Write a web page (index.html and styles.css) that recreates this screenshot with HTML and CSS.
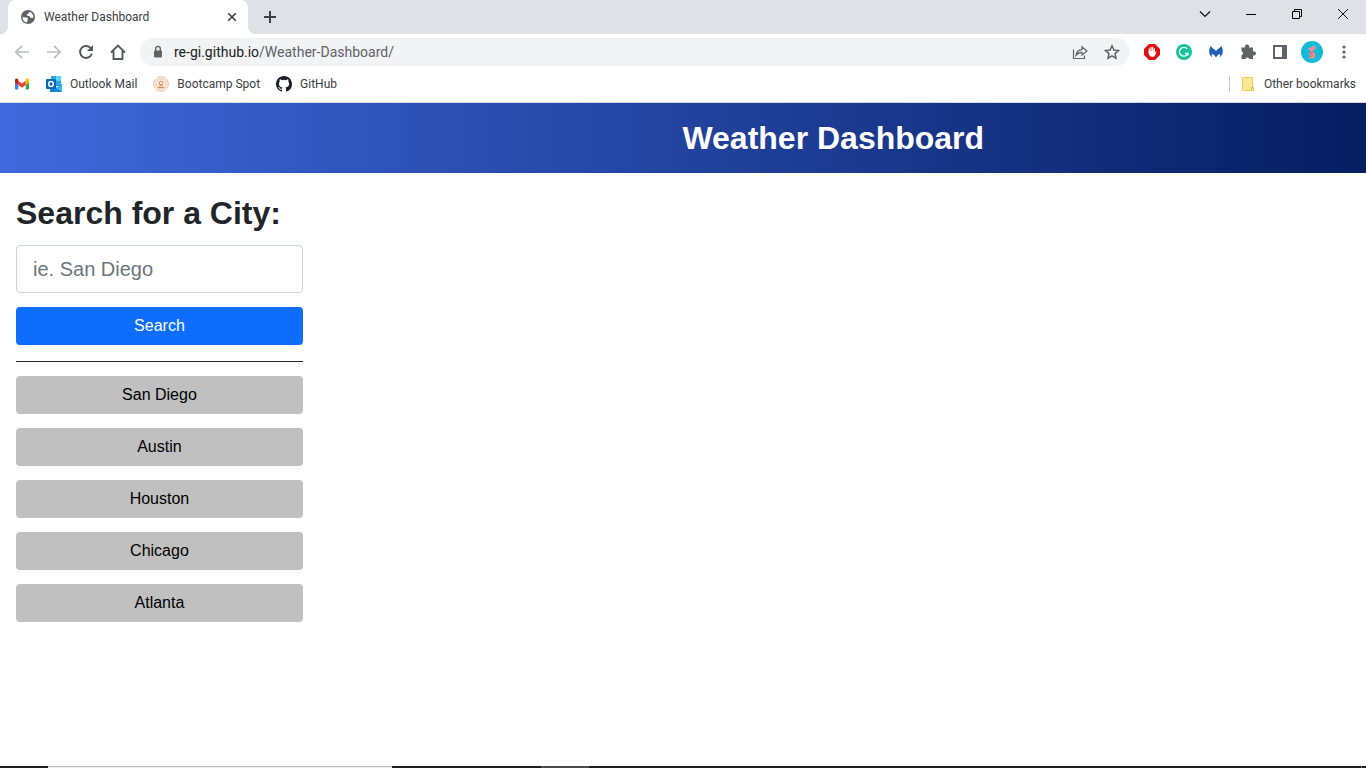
FILE: index.html
```html
<!DOCTYPE html>
<html lang="en">
<head>
<meta charset="utf-8">
<meta name="viewport" content="width=device-width, initial-scale=1">
<title>Weather Dashboard</title>
<link rel="stylesheet" href="styles.css">
</head>
<body>
<div class="browser">
  <div class="tabstrip">
    <div class="tab">
      <svg class="icon16" viewBox="0 0 16 16"><circle cx="8" cy="8" r="7" fill="#5f6368"/><path d="M2.500 8.200l4.300.2c1.200.2 1.500 1.300.8 2.200l-.5 2.900C4.300 13.200 2.600 11 2.500 8.200zM9.500 2.700L8.300 4.800l-1.500.4.300 1.500 2.200.3 1.200 1.700 2.900.2c.4-2.800-1.200-5.200-3.900-6.200z" fill="#fff"/></svg>
      <span class="tab-title">Weather Dashboard</span>
      <button class="tab-close" aria-label="Close tab"><svg class="icon16" viewBox="0 0 16 16"><path d="M4.200 4.200l7.600 7.600M11.800 4.200l-7.600 7.600" stroke="#3c4043" stroke-width="1.600"/></svg></button>
    </div>
    <button class="new-tab" aria-label="New tab"><svg class="icon16" viewBox="0 0 16 16"><path d="M8 2v12M2 8h12" stroke="#3c4043" stroke-width="2"/></svg></button>
    <div class="window-controls">
      <button class="window-button" aria-label="Search tabs"><svg class="icon16" viewBox="0 0 16 16"><path d="M3 5.500l5 5 5-5" fill="none" stroke="#111" stroke-width="1.200"/></svg></button>
      <button class="window-button" aria-label="Minimize"><svg class="icon16" viewBox="0 0 16 16"><path d="M3 8.500h10" stroke="#000"/></svg></button>
      <button class="window-button" aria-label="Restore"><svg class="icon16" viewBox="0 0 16 16"><path d="M3.500 5.500h7v7h-7zM5.500 5.500v-2h7v7h-2" fill="none" stroke="#000"/></svg></button>
      <button class="window-button" aria-label="Close"><svg class="icon16" viewBox="0 0 16 16"><path d="M3 3l10 10M13 3L3 13" stroke="#111"/></svg></button>
    </div>
  </div>

  <div class="toolbar">
    <button class="tool" aria-label="Back"><svg class="icon16" viewBox="0 0 16 16"><path d="M15 8H2M8 1.800L1.800 8 8 14.200" fill="none" stroke="#babcbe" stroke-width="1.700"/></svg></button>
    <button class="tool" aria-label="Forward"><svg class="icon16" viewBox="0 0 16 16"><path d="M1 8h13M8 1.800L14.200 8 8 14.200" fill="none" stroke="#babcbe" stroke-width="1.700"/></svg></button>
    <button class="tool" aria-label="Reload"><svg class="icon16" viewBox="0 0 16 16"><path d="M13.200 4.700A6 6 0 1 0 13.800 9.800" fill="none" stroke="#54585d" stroke-width="2"/><path d="M15 1v6H9z" fill="#54585d"/></svg></button>
    <button class="tool" aria-label="Home"><svg class="icon16" viewBox="0 0 16 16"><path d="M1 8.500L8 1.500l7 7M3.500 7v8h9V7" fill="none" stroke="#54585d" stroke-width="1.900"/></svg></button>
    <div class="omnibox">
      <svg class="icon16" viewBox="0 0 16 16"><rect x="4" y="6.500" width="8" height="7" rx="1" fill="#5f6368"/><path d="M5.700 7V4.700a2.300 2.300 0 0 1 4.600 0V7" fill="none" stroke="#5f6368" stroke-width="1.400"/></svg>
      <div class="address" role="textbox" aria-label="Address" contenteditable="true" spellcheck="false">re-gi.github.io<span class="address-path">/Weather-Dashboard/</span></div>
      <button class="tool" aria-label="Share"><svg class="icon16" viewBox="0 0 16 16"><path d="M1.500 5.500v9h11v-3M4 11.500c.3-3.600 2.400-5.600 6-5.900V2.700L15 7l-5 4V8.400C7.500 8.300 5.600 9.200 4 11.500z" fill="none" stroke="#5f6368" stroke-width="1.200"/></svg></button>
      <button class="tool" aria-label="Bookmark"><svg class="icon16" viewBox="0 0 16 16"><path d="M8 1.800l1.900 4.200 4.600.5-3.500 3.100 1 4.600-4-2.400-4 2.400 1-4.600L1.500 6.500 6.100 6z" fill="none" stroke="#5f6368" stroke-width="1.500"/></svg></button>
    </div>
    <button class="tool" aria-label="Ad blocker"><svg class="icon16" viewBox="0 0 16 16"><path d="M5 0h6l5 5v6l-5 5H5l-5-5V5z" fill="#e40d0d"/><path d="M5.300 9V5M7 8V3.500M8.700 8V3.500M10.300 8V4.800" stroke="#fff" stroke-width="1.300" stroke-linecap="round"/><path d="M4.700 7h6.200v1.800l1-1.500c.9 0 .6.800-.2 2.400-.6 1.500-1.300 3.200-3.300 3.200-2.500 0-3.700-1.700-3.700-5.900z" fill="#fff"/></svg></button>
    <button class="tool" aria-label="Writing assistant"><svg class="icon16" viewBox="0 0 16 16"><circle cx="8" cy="8" r="8" fill="#15c39a"/><path d="M11.200 4.900A4.400 4.400 0 1 0 12 9.300H9M12 9v2.600" fill="none" stroke="#fff" stroke-width="1.300"/></svg></button>
    <button class="tool" aria-label="Web protection"><svg class="icon16" viewBox="0 0 16 16"><path d="M2.600 2C3.800 4.200 6.200 4.500 8 7c1.800-2.500 4.200-2.800 5.400-5 2.300 4.500 1.900 8.500-1.700 11.500.7-1.500.7-2.500.2-3.500-1.500.3-2.700 1.500-3.900 3.500-1.200-2-2.400-3.200-3.900-3.500-.5 1-.5 2 .2 3.500C.7 10.500.3 6.500 2.600 2z" fill="#1f63b6"/></svg></button>
    <button class="tool" aria-label="Extensions"><svg class="icon16" viewBox="0 0 16 16"><path d="M1.500 3.500H5a2.200 2.200 0 1 1 4 0h4v4a2.100 2.100 0 1 1 0 3.800V15H9.300a2 2 0 0 0-3.900 0H1.500v-3.800a2 2 0 0 0 0-3.900z" fill="#5f6368"/></svg></button>
    <button class="tool" aria-label="Side panel"><svg class="icon16" viewBox="0 0 16 16"><path d="M1 1h14v14H1zM3 3v10h7V3z" fill="#5f6368" fill-rule="evenodd"/></svg></button>
    <button class="tool" aria-label="Profile"><svg class="avatar" viewBox="0 0 22 22"><circle cx="11" cy="11" r="11" fill="#12bcd6"/><path d="M7.500 7.800C8 6.400 9.500 6.300 10.800 6.300L12.500 4.800l3.300.2-2.300 1.300 1.700.7-2.500 1.700-.9 1.300c1.800 1.500 2.700 3 2.500 5l-1.300 2.600H6.800l1.900-1.600.4-2.500-2.300-.8 2.200-.8.5-2.400-1.800-.4z" fill="#fb8993"/><path d="M8.500 11.500l2 1 1.300-2M9.500 15.500l2-1" fill="none" stroke="#a44a5e" stroke-width=".7"/></svg></button>
    <button class="tool" aria-label="Menu"><svg class="icon16" viewBox="0 0 16 16"><circle cx="8" cy="3" r="1.600" fill="#5f6368"/><circle cx="8" cy="8" r="1.600" fill="#5f6368"/><circle cx="8" cy="13" r="1.600" fill="#5f6368"/></svg></button>
  </div>

  <nav class="bookmarks" aria-label="Bookmarks">
    <a class="bookmark" href="#" aria-label="Gmail"><svg class="icon16" viewBox="0 0 16 16"><path d="M1 4.500l3.300 2.500v6.500H2a1 1 0 0 1-1-1z" fill="#4285f4"/><path d="M15 4.500L11.700 7v6.500H14a1 1 0 0 0 1-1z" fill="#34a853"/><path d="M4.300 4.700L8 7.500l3.700-2.800v4.200L8 11.700 4.300 8.900z" fill="#ea4335"/><path d="M1 4.300c0-1.700 1.800-2.300 3.300-.9v5.500L1 6.400z" fill="#c5221f"/><path d="M15 4.300c0-1.700-1.800-2.300-3.300-.9v5.500L15 6.400z" fill="#fbbc04"/></svg></a>
    <a class="bookmark" href="#"><svg class="icon16" viewBox="0 0 16 16"><path d="M5 0h10v10H5z" fill="#1490df"/><path d="M10 0h5v5h-5z" fill="#50d9ff"/><path d="M5 0h5v5H5zM10 5h5v4h-5z" fill="#28a8ea"/><path d="M4 8l6 4 6-4v8H4z" fill="#1687d9"/><path d="M10 12l6-4v8z" fill="#35b8f1"/><rect y="3" width="10" height="10" rx="1" fill="#0364b8"/><ellipse cx="5" cy="8" rx="2.300" ry="2.500" fill="none" stroke="#fff" stroke-width="1.500"/></svg><span>Outlook Mail</span></a>
    <a class="bookmark" href="#"><svg class="icon16" viewBox="0 0 16 16"><circle cx="8" cy="8" r="7.300" fill="#fbeee3" stroke="#e6b08b" stroke-dasharray="2 .6"/><circle cx="8" cy="8" r="5" fill="none" stroke="#dfa37b" stroke-dasharray="1 .7"/><circle cx="8" cy="7" r="1.800" fill="none" stroke="#cf8657"/><path d="M4.700 11.500h6.600M6 9.800h4" stroke="#d58c5e"/></svg><span>Bootcamp Spot</span></a>
    <a class="bookmark" href="#"><svg class="icon16" viewBox="0 0 16 16"><path fill="#1b1f23" d="M8 0C3.580 0 0 3.580 0 8c0 3.540 2.290 6.530 5.470 7.590.4.070.55-.17.55-.38 0-.19-.01-.82-.01-1.490-2.010.37-2.530-.49-2.690-.94-.09-.23-.48-.94-.82-1.130-.28-.15-.68-.52-.01-.53.63-.01 1.080.58 1.230.82.72 1.210 1.870.87 2.330.66.07-.52.28-.87.51-1.070-1.780-.2-3.640-.89-3.640-3.950 0-.87.31-1.590.82-2.150-.08-.2-.36-1.020.08-2.120 0 0 .67-.21 2.200.82a7.600 7.600 0 0 1 4 0c1.530-1.040 2.200-.82 2.200-.82.44 1.100.16 1.920.08 2.120.51.56.82 1.270.82 2.150 0 3.070-1.870 3.750-3.650 3.950.29.25.54.73.54 1.480 0 1.070-.01 1.930-.01 2.200 0 .21.15.46.55.38A8 8 0 0 0 16 8c0-4.420-3.580-8-8-8z"/></svg><span>GitHub</span></a>
    <a class="bookmark other" href="#"><svg class="icon16" viewBox="0 0 16 16"><path d="M2.500 1.500h10v10h1v3h-11z" fill="#ffe793" stroke="#f0c852"/><path d="M11.500 14.500v-3h2v3" fill="#ffe793" stroke="#e8bb34"/></svg><span>Other bookmarks</span></a>
  </nav>
</div>

<header class="header"><h1 class="title">Weather Dashboard</h1></header>
<main class="main">
  <section class="sidebar">
    <form class="search">
      <label class="search-label" for="city">Search for a City:</label>
      <input class="search-input" id="city" type="text" placeholder="ie. San Diego">
      <button class="button primary" type="button">Search</button>
    </form>
    <hr class="rule">
    <div class="history">
      <button class="button">San Diego</button>
      <button class="button">Austin</button>
      <button class="button">Houston</button>
      <button class="button">Chicago</button>
      <button class="button">Atlanta</button>
    </div>
  </section>
</main>
<div class="taskbar">
  <div class="task-start"></div>
  <div class="task-search"></div>
  <div class="task-space"></div>
  <div class="task-active"></div>
  <div class="task-fill"></div>
</div>
</body>
</html>
```
FILE: styles.css
```css
* { box-sizing: border-box; }

body {
  margin: 0;
  min-height: 100vh;
  display: flex;
  flex-direction: column;
  background: #fff;
  color: #212529;
  font: 16px/24px "Liberation Sans", Arial, sans-serif;
}

button { border: 0; padding: 0; background: none; font: inherit; color: inherit; cursor: pointer; }
svg { display: block; flex: none; }
.icon16 { width: 16px; height: 16px; }
.avatar { width: 22px; height: 22px; }

/* Browser frame */
.browser {
  color: #3c4043;
  font: 12px/16px "Segoe UI", Roboto, sans-serif;
  border-bottom: 1px solid #d9dadc;
}

.tabstrip { display: flex; align-items: center; height: 34px; padding-left: 8px; background: #dee1e6; }
.tab {
  position: relative;
  display: flex;
  align-items: center;
  gap: 8px;
  width: 240px;
  height: 34px;
  padding: 0 8px 0 12px;
  background: #fff;
  border-radius: 8px 8px 0 0;
}
.tab::before, .tab::after {
  content: "";
  position: absolute;
  bottom: 0;
  width: 8px;
  height: 8px;
}
.tab::before { right: 100%; background: radial-gradient(circle at 0 0, transparent 8px, #fff 8px); }
.tab::after { left: 100%; background: radial-gradient(circle at 100% 0, transparent 8px, #fff 8px); }
.tab-title { flex: 1; white-space: nowrap; }
.new-tab { margin-left: 14px; }
.window-controls { display: flex; align-self: flex-start; margin-left: auto; }
.window-button { display: grid; place-items: center; width: 46px; height: 28px; }

.toolbar { display: flex; align-items: center; height: 36px; padding: 0 6px; }
.tool { display: grid; place-items: center; flex: none; width: 32px; height: 28px; }
.omnibox {
  display: flex;
  align-items: center;
  flex: 1;
  height: 28px;
  margin: 0 6px;
  padding: 0 2px 0 10px;
  border-radius: 14px;
  background: #f1f3f4;
}
.address { flex: 1; margin-left: 8px; color: #202124; font-size: 14px; line-height: 20px; white-space: nowrap; outline: 0; }
.address-path { color: #5f6368; }

.bookmarks { display: flex; align-items: center; gap: 16px; height: 32px; padding: 0 10px 4px 14px; }
.bookmark { display: flex; align-items: center; gap: 8px; color: inherit; text-decoration: none; white-space: nowrap; }
.other { margin-left: auto; padding-left: 10px; border-left: 1px solid #c6c8ca; }

/* Page */
.header {
  padding: 16px 0 16px 22%;
  background: linear-gradient(to right, #3f69dc, #051d61);
  color: #fff;
  text-align: center;
}
.title { margin: 0; font-size: 32px; line-height: 38px; }

.main { flex: 1; padding: 22px 16px; }
.sidebar { width: 21vw; min-width: 280px; }
.search, .history { display: flex; flex-direction: column; gap: 14px; }
.search-label { font-size: 32px; font-weight: 700; line-height: 36px; white-space: nowrap; }
.search-input {
  width: 100%;
  height: 48px;
  padding: 8px 16px;
  border: 1px solid #ced4da;
  border-radius: 4px;
  background: #fff;
  color: #212529;
  font: 20px/30px "Liberation Sans", Arial, sans-serif;
}
.search-input::placeholder { color: #6c757d; opacity: 1; }
.button { width: 100%; height: 38px; border-radius: 4px; background: #c0c0c0; color: #000; }
.primary { background: #0d6efd; color: #fff; }
.rule { width: 100%; height: 1px; margin: 16px 0 14px; border: 0; background: #212529; }

/* Desktop taskbar edge */
.taskbar { display: flex; height: 2px; background: #231f20; }
.task-start { width: 48px; }
.task-search { width: 344px; border-top: 1px solid #c0c0c0; background: #f0f0f0; }
.task-space { width: 149px; }
.task-active { width: 48px; background: #4d4a4b; }
.task-fill { flex: 1; margin-right: 4px; border-right: 1px solid #777; }
```
